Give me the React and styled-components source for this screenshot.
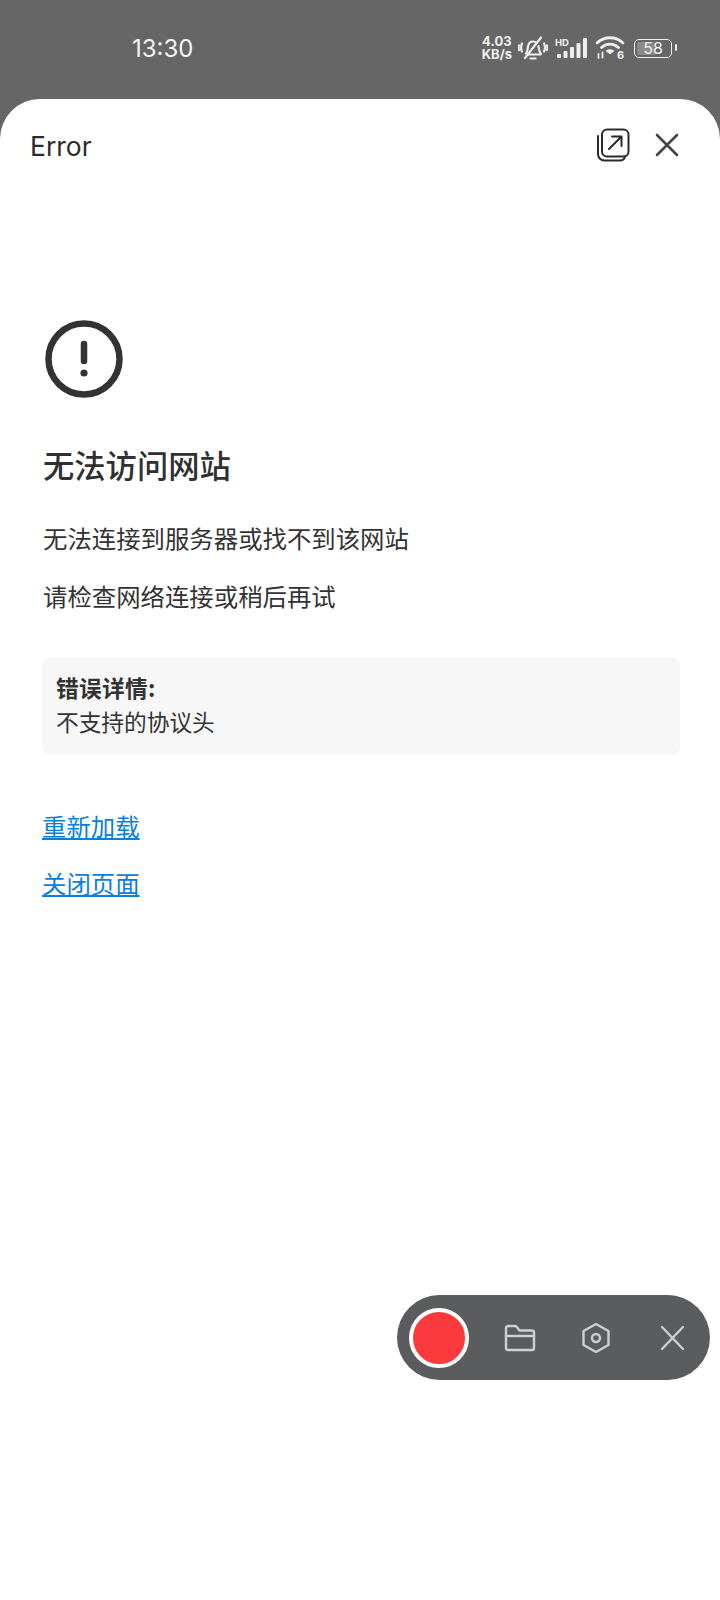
import React from "react";
import styled, {createGlobalStyle} from "styled-components";

const Global = createGlobalStyle`
    html, body {
        margin: 0;
        padding: 0;
        background: #fff;
    }
    body {
        font-family: "Noto Sans CJK SC", "Inter", sans-serif;
    }
`;

const Screen = styled.div`
    position: relative;
    width: 720px;
    height: 1600px;
    overflow: hidden;
    background: #666;
    display: flex;
    flex-direction: column;
`;

const StatusBar = styled.div`
    height: 99px;
    flex: none;
    display: flex;
    align-items: flex-start;
    justify-content: space-between;
    padding: 0 43px 0 132px;
    box-sizing: border-box;
    color: #fff;
`;

const Clock = styled.div`
    font-family: "Inter", sans-serif;
    font-size: 24px;
    line-height: 30px;
    margin-top: 34px;
    color: #f4f4f4;
`;

const StatusIcons = styled.div`
    display: flex;
    align-items: center;
    margin-top: 33px;
    height: 30px;
`;

const Speed = styled.div`
    font-family: "Inter", sans-serif;
    font-weight: 700;
    font-size: 13px;
    line-height: 13px;
    text-align: center;
    color: #f0f0f0;
    margin-right: 6px;
`;

const StatusGlyph = styled.svg`
    display: block;
    margin-right: ${p => p.$gap}px;
`;

const Battery = styled.div`
    position: relative;
    width: 38px;
    height: 19px;
    box-sizing: border-box;
    margin-right: 5px;
    border: 1.5px solid #eee;
    border-radius: 5px;
    display: flex;
    align-items: center;
    justify-content: center;
    font-family: "Inter", sans-serif;
    font-size: 16px;
    color: #eee;

    &::before {
        content: "";
        position: absolute;
        left: 2px;
        top: 2px;
        bottom: 2px;
        width: 19px;
        border-radius: 2px;
        background: #8a8a8a;
    }
    &::after {
        content: "";
        position: absolute;
        right: -6px;
        top: 4.500px;
        width: 2.500px;
        height: 7px;
        border-radius: 1px;
        background: #eee;
    }
    span {
        position: relative;
    }
`;

const Sheet = styled.div`
    flex: 1;
    background: #fff;
    border-radius: 40px 40px 0 0;
    display: flex;
    flex-direction: column;
`;

const Header = styled.div`
    display: flex;
    align-items: center;
    justify-content: space-between;
    height: 92px;
    padding: 0 40px 0 30px;
    flex: none;
`;

const HeaderTitle = styled.div`
    font-family: "Inter", sans-serif;
    font-size: 26.500px;
    margin-top: 2px;
    color: #2b2b2b;
`;

const HeaderActions = styled.div`
    display: flex;
    align-items: center;
    gap: 24px;
`;

const Content = styled.div`
    padding: 129px 40px 0 42px;
    display: flex;
    flex-direction: column;
    align-items: flex-start;
`;

const ErrorIcon = styled.svg`
    display: block;
    margin-left: 3px;
`;

const Title = styled.h1`
    margin: 45px 0 0 1px;
    font-size: 31.300px;
    line-height: 44px;
    font-weight: 500;
    color: #303030;
`;

const Para = styled.p`
    margin: ${p => p.$top}px 0 0 1px;
    font-size: 24.400px;
    line-height: 36px;
    color: #333;
`;

const DetailBox = styled.div`
    align-self: stretch;
    margin-top: 44px;
    padding: 13px 14px 16px;
    background: #f7f7f7;
    border-radius: 8px;
    font-size: 22.700px;
    line-height: 34px;
    color: #333;
`;

const DetailHead = styled.div`
    font-weight: 700;
    letter-spacing: 0.300px;
`;

const Link = styled.a`
    margin-top: ${p => p.$top}px;
    font-size: 24.400px;
    line-height: 36px;
    color: #0a7fdc;
    text-decoration: underline;
`;

const RecBar = styled.div`
    position: absolute;
    left: 397px;
    top: 1295px;
    width: 313px;
    height: 85px;
    border-radius: 43px;
    background: #5b5c5d;
    display: flex;
    align-items: center;
    padding-left: 12px;
    box-sizing: border-box;
`;

const RecButton = styled.div`
    width: 60px;
    height: 60px;
    flex: none;
    box-sizing: border-box;
    border: 4px solid #fff;
    border-radius: 50%;
    background: #fb3a3e;
    margin-right: 35px;
`;

const RecIcons = styled.div`
    display: flex;
    align-items: center;
    gap: 44px;
`;

const BarIcon = ({children}) => (
    <svg width="32" height="32" viewBox="0 0 32 32" fill="none" stroke="#cfcfcf" strokeWidth="2.400" strokeLinecap="round" strokeLinejoin="round">
        {children}
    </svg>
);

export default function App(){
    return(
        <Screen>
            <Global />
            <StatusBar>
                <Clock>13:30</Clock>
                <StatusIcons>
                    <Speed>4.03<br />KB/s</Speed>
                    <StatusGlyph $gap={7} width="30" height="24" viewBox="0 0 30 24" fill="none" stroke="#eee" strokeWidth="2.200" strokeLinecap="round" strokeLinejoin="round">
                        <path d="M8 17.500c1.500-1.500 1.500-4 2-7 .5-3 2.500-5 5-5 1.500 0 2.700.5 3.600 1.500M20.500 10c.5 3 .5 5.500 2 7 .8 1 .3 1.500-.7 1.500H10" />
                        <path d="M12.500 22.500h5" />
                        <path d="M7 22L23 1.500" />
                        <path d="M4 7.500c-1.200 2.500-1.200 5.500 0 8M1 9.500c-.5 1.500-.5 3 0 4.500M26 7.500c1.200 2.500 1.200 5.500 0 8M29 9.500c.5 1.500.5 3 0 4.500" />
                    </StatusGlyph>
                    <StatusGlyph $gap={8} width="32" height="22" viewBox="0 0 32 22" fill="#eee">
                        <rect x="2" y="17" width="4" height="4" rx="1" />
                        <rect x="8.500" y="14" width="4" height="7" rx="1" />
                        <rect x="15" y="10" width="4" height="11" rx="1" />
                        <rect x="21.500" y="6" width="4" height="15" rx="1" />
                        <rect x="28" y="1" width="4" height="20" rx="1" />
                        <text x="0" y="9" fontFamily="Inter, sans-serif" fontSize="9.500" fontWeight="700">HD</text>
                    </StatusGlyph>
                    <StatusGlyph $gap={9} width="30" height="26" viewBox="0 0 30 26" fill="none" stroke="#eee" strokeWidth="2.800" strokeLinecap="round">
                        <path d="M2 8c7-7 19-7 26 0" />
                        <path d="M6.500 12.500c5-4.500 12-4.500 17 0" />
                        <path d="M15 18.500l-3.500-2.500c2.300-1.500 4.700-1.500 7 0z" fill="#eee" strokeWidth="1.200" strokeLinejoin="round" />
                        <path d="M3.500 19v4M7.500 17.500v5" strokeWidth="1.800" />
                        <text x="22" y="24" fill="#eee" stroke="none" fontFamily="Inter, sans-serif" fontSize="11" fontWeight="700">6</text>
                    </StatusGlyph>
                    <Battery><span>58</span></Battery>
                </StatusIcons>
            </StatusBar>
            <Sheet>
                <Header>
                    <HeaderTitle>Error</HeaderTitle>
                    <HeaderActions>
                        <svg width="34" height="34" viewBox="0 0 34 34" fill="none" stroke="#2b2b2b" strokeWidth="2" strokeLinecap="round" strokeLinejoin="round">
                            <rect x="6" y="1.500" width="26.500" height="27" rx="5" />
                            <path d="M2 8v18c0 3.500 2.500 6.500 6.500 6.500H24c2.500 0 4.500-1.500 5-4" />
                            <path d="M13 21L25 9M16 8.500h9.500V18" />
                        </svg>
                        <svg width="26" height="26" viewBox="0 0 26 26" fill="none" stroke="#444" strokeWidth="2.600" strokeLinecap="round">
                            <path d="M3 3l20 20M23 3L3 23" />
                        </svg>
                    </HeaderActions>
                </Header>
                <Content>
                    <ErrorIcon width="78" height="78" viewBox="0 0 78 78" fill="none">
                        <circle cx="39" cy="39" r="35.500" stroke="#333" strokeWidth="6.500" />
                        <path d="M39 24v17" stroke="#333" strokeWidth="6.500" strokeLinecap="round" />
                        <circle cx="39" cy="53" r="3.600" fill="#333" />
                    </ErrorIcon>
                    <Title>无法访问网站</Title>
                    <Para $top={33}>无法连接到服务器或找不到该网站</Para>
                    <Para $top={22}>请检查网络连接或稍后再试</Para>
                    <DetailBox>
                        <DetailHead>错误详情:</DetailHead>
                        <div>不支持的协议头</div>
                    </DetailBox>
                    <Link $top={53}>重新加载</Link>
                    <Link $top={21}>关闭页面</Link>
                </Content>
            </Sheet>
            <RecBar>
                <RecButton />
                <RecIcons>
                    <BarIcon>
                        <path d="M2 26V6.500C2 5 3 4 4.500 4h6.300c.8 0 1.500.4 2 1l2.700 3.500H28c1.300 0 2 .9 2 2V26c0 1.300-.9 2-2 2H4c-1.300 0-2-.7-2-2z" />
                        <path d="M2 14h28" />
                    </BarIcon>
                    <BarIcon>
                        <path d="M16 2l12.500 7v14L16 30 3.500 23V9z" />
                        <circle cx="16" cy="16" r="4" />
                    </BarIcon>
                    <BarIcon>
                        <path d="M6 5l21 22M27 5L6 27" />
                    </BarIcon>
                </RecIcons>
            </RecBar>
        </Screen>
    );
}
